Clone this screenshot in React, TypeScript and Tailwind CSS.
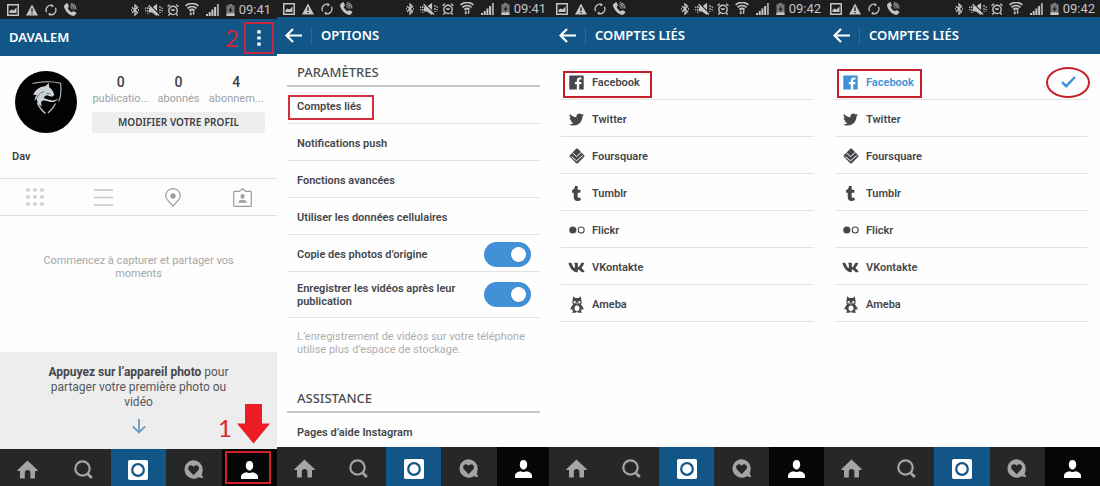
import React from 'react';
import { FaTwitter, FaVk } from 'react-icons/fa';
import { FaTumblr } from 'react-icons/fa6';

type IconProps = { className?: string };

const roboto = "font-['Roboto',sans-serif]";
const noto = "font-['Noto_Sans',sans-serif]";

/* ---------- status bar ---------- */

function StatusIconsLeft() {
  return (
    <div className="flex items-center gap-[7px]">
      <svg className="h-3 w-3" viewBox="0 0 12 12" aria-hidden="true">
        <rect x="0.75" y="0.75" width="10.5" height="10.5" fill="none" stroke="currentColor" strokeWidth="1.5" />
        <path d="M2.5 9V7L4.5 5.5L6.5 6.5L9.5 3.5V9Z" fill="currentColor" />
      </svg>
      <svg className="h-3 w-3" viewBox="0 0 12 12" aria-hidden="true">
        <path d="M6 0.5L12 11.5H0Z" fill="currentColor" />
        <path d="M6 4.3V8M6 9V10.3" stroke="#1d1e20" strokeWidth="1.3" />
      </svg>
      <svg className="h-3 w-3" viewBox="0 0 12 12" fill="none" stroke="currentColor" strokeWidth="1.3" aria-hidden="true">
        <path d="M1.6 8.2A4.9 4.9 0 0 1 7.8 1.5M10.4 3.8A4.9 4.9 0 0 1 4.2 10.5" />
        <path d="M6.6 0L9 2L6.4 3.4ZM5.4 12L3 10L5.6 8.6Z" fill="currentColor" stroke="none" />
      </svg>
      <svg className="h-[13px] w-[13px]" viewBox="0 0 13 13" aria-hidden="true">
        <path
          d="M0.5 2L2.7 0.2C3.2 0 3.5 0.2 3.8 0.7L4.9 3C5 3.5 4.9 3.8 4.5 4.1L3.6 4.9C4.5 6.8 5.8 8.2 7.8 9.3L8.8 8.4C9.1 8.1 9.5 8.1 9.9 8.3L12 9.6C12.4 9.9 12.5 10.3 12.2 10.7L10.5 12.5C9.8 13.1 8.8 13 7.6 12.5C4 10.9 1.4 8 0.2 4.4C0 3.4 0 2.6 0.5 2Z"
          fill="currentColor"
        />
        <path d="M6.3 4.3A2.6 2.6 0 0 1 8.3 6.6M6.5 2.4A4.4 4.4 0 0 1 10.2 6.6M6.7 0.6A6.3 6.3 0 0 1 12 6.6" fill="none" stroke="currentColor" strokeWidth="1.1" opacity="0.75" />
      </svg>
    </div>
  );
}

function StatusIconsRight() {
  return (
    <div className="flex items-center gap-[6px]">
      <svg className="h-3 w-2" viewBox="0 0 8 12" fill="none" stroke="currentColor" strokeWidth="1.3" aria-hidden="true">
        <path d="M1 3.3L6.6 8.6L4 11V1L6.6 3.4L1 8.7" />
        <path d="M0 6H1M7 6H8" />
      </svg>
      <svg className="-mr-0.5 h-3 w-[18px]" viewBox="0 0 18 12" fill="none" stroke="currentColor" strokeWidth="1.2" aria-hidden="true">
        <path d="M4.5 4.3H7L11.5 1V11L7 7.8H4.5Z" fill="currentColor" />
        <path d="M4 0.2L14.5 10.6" stroke="#1d1e20" strokeWidth="1.4" />
        <path d="M3.6 1.2L14 11.4" strokeWidth="1.4" />
        <path d="M2.8 3V10M15 2V9" strokeDasharray="2 1" />
        <path d="M0.7 3.5V8.5M17.2 3.5V8.5" strokeDasharray="1.4 1" />
      </svg>
      <svg className="h-3 w-3" viewBox="0 0 12 12" fill="none" stroke="currentColor" strokeWidth="1.4" aria-hidden="true">
        <circle cx="6" cy="6.4" r="4.2" />
        <path d="M6 6.6L4.2 5.2M6 6.6L7.6 5.4" />
        <path d="M0.6 2.8L2.8 0.8M11.4 2.8L9.2 0.8M2.8 9.8L1.4 11.6M9.2 9.8L10.6 11.6" />
      </svg>
      <svg className="h-[13px] w-[14px]" viewBox="0 0 14 13" fill="none" stroke="currentColor" strokeWidth="1.8" aria-hidden="true">
        <path d="M0.6 2.9A9.6 9.6 0 0 1 13.4 2.9M2.5 5.3A6.8 6.8 0 0 1 11.5 5.3M4.4 7.6A4 4 0 0 1 9.6 7.6" />
        <path d="M5.8 8.4V12M8.6 12V8.6" strokeWidth="1" />
        <path d="M4.3 10.6H7.2L5.8 12.8ZM7.3 10.2H10L8.6 8.2Z" fill="currentColor" stroke="none" />
      </svg>
      <svg className="ml-px h-3 w-[14px]" viewBox="0 0 14 12" fill="currentColor" aria-hidden="true">
        <path d="M0 10H2V12H0ZM2.7 8H4.7V12H2.7ZM5.4 5.6H7.4V12H5.4ZM8.1 3H10.1V12H8.1Z" />
        <path d="M10.9 0H12.9V12H10.9Z" opacity="0.8" />
      </svg>
      <svg className="h-3 w-[9px]" viewBox="0 0 9 12" aria-hidden="true">
        <path d="M2.8 0H6.2V1.2H8.5V12H0.5V1.2H2.8Z" fill="#77787a" />
        <path d="M0.5 9.4H8.5V12H0.5Z" fill="currentColor" />
        <path d="M5.6 2.4L2.4 6.6H4.3L3.6 9.6L6.8 5.4H4.9Z" fill="#1d1e20" />
      </svg>
    </div>
  );
}

function StatusBar({ time, className }: { time: string; className: string }) {
  return (
    <div className={`flex items-center justify-between bg-[#1d1e20] text-[#c4c5c6] ${className}`}>
      <StatusIconsLeft />
      <div className="flex items-center gap-1">
        <StatusIconsRight />
        <span className={`${roboto} text-[13px] leading-4`}>{time}</span>
      </div>
    </div>
  );
}

/* ---------- header ---------- */

function BackHeader({ title, className }: { title: string; className: string }) {
  return (
    <header className={`flex h-[37px] items-center bg-[#125688] text-white ${className}`}>
      <button type="button" aria-label="Retour" className="mr-[9px]">
        <svg className="h-[15px] w-[17px]" viewBox="0 0 17 15" fill="none" stroke="currentColor" strokeWidth="2.2" aria-hidden="true">
          <path d="M17 7.5H1.5M8 1L1.5 7.5L8 14" />
        </svg>
      </button>
      <span className="mr-[9px] h-[18px] w-px bg-[#2f6b98]" />
      <h1 className={`${noto} text-[13px] font-semibold`}>{title}</h1>
    </header>
  );
}

/* ---------- bottom navigation ---------- */

function NavBar({ className, highlighted = false }: { className: string; highlighted?: boolean }) {
  const cell = 'flex items-center justify-center pt-1';
  return (
    <nav className={`grid bg-[#262729] text-[#a3a4a6] ${className}`}>
      <button type="button" aria-label="Accueil" className={cell}>
        <svg className="h-[19px] w-[21px]" viewBox="0 0 21 19" fill="currentColor" aria-hidden="true">
          <path d="M10.5 0.5L20.8 10.2C21 10.6 20.8 11 20.3 11H18V17.6C18 18.3 17.6 18.6 17 18.6H13.4V12.5C13.4 11 12.3 10 10.6 10C8.9 10 7.8 11 7.8 12.5V18.6H4C3.4 18.6 3 18.3 3 17.6V11H0.7C0.2 11 0 10.6 0.3 10.2Z" />
        </svg>
      </button>
      <button type="button" aria-label="Rechercher" className={cell}>
        <svg className="h-[19px] w-[19px]" viewBox="0 0 19 19" fill="none" stroke="currentColor" aria-hidden="true">
          <circle cx="8.5" cy="8.5" r="7.2" strokeWidth="2.2" />
          <path d="M13.6 13.8L17.8 18" strokeWidth="2.8" />
        </svg>
      </button>
      <button type="button" aria-label="Appareil photo" className={`${cell} bg-[#125688] text-white`}>
        <svg className="h-5 w-5" viewBox="0 0 20 20" aria-hidden="true">
          <rect width="20" height="20" rx="1.8" fill="currentColor" />
          <circle cx="10" cy="10" r="5.8" fill="none" stroke="#125688" strokeWidth="2.2" />
        </svg>
      </button>
      <button type="button" aria-label="Activité" className={cell}>
        <svg className="h-[19px] w-5" viewBox="0 0 20 19" aria-hidden="true">
          <path d="M9.5 0.3A9.2 9.2 0 0 1 18.7 9.5C18.7 11.7 18.2 13.2 17.7 14.4L19.3 18.3L14.6 17.3A9.2 9.2 0 1 1 9.5 0.3Z" fill="currentColor" />
          <path d="M9.6 15.2L5.1 10.6C3.2 8.2 4.6 5.3 6.9 5.3C8.2 5.3 9.1 6 9.6 7C10.1 6 11 5.3 12.3 5.3C14.6 5.3 16 8.2 14.1 10.6Z" fill="#262729" />
        </svg>
      </button>
      <button type="button" aria-label="Profil" className={`relative ${cell} bg-[#060606] text-white`}>
        <svg className="h-[18px] w-[17px]" viewBox="0 0 17 18" fill="currentColor" aria-hidden="true">
          <path d="M8.5 0C11 0 12.2 1.9 12.2 4.6C12.2 7.2 10.7 9.6 8.5 9.6C6.3 9.6 4.8 7.2 4.8 4.6C4.8 1.9 6 0 8.5 0Z" />
          <path d="M0 18V15.5C0 13.2 2.5 11.9 5.6 11.3C7.2 12.3 9.8 12.3 11.4 11.3C14.5 11.9 17 13.2 17 15.5V18Z" />
        </svg>
        {highlighted && <span className="absolute top-0.5 right-[6px] bottom-0.5 left-[3px] border-2 border-[#d8202a]" />}
      </button>
    </nav>
  );
}

/* ---------- screen 1 : profile ---------- */

function Avatar() {
  return (
    <svg className="h-[62px] w-[62px] shrink-0" viewBox="0 0 62 62" role="img" aria-label="Dav">
      <circle cx="31" cy="31" r="31" fill="#020202" />
      <g fill="none" stroke="#b9c0c2">
        <path d="M17.5 12.5C26 10.3 38 10.2 45.6 12.3C46.4 20 46 26 43.6 30.5" strokeWidth="1.1" />
        <path d="M40.5 32.5C38.5 36.5 36 39.5 33 42" strokeWidth="1.3" />
        <path d="M22.5 32C24.3 36.5 27 39.6 30.5 42.3" strokeWidth="1.6" />
      </g>
      <path
        d="M18 24C19.5 20.5 22 17.6 26 16L30.5 15L33.8 12L34.2 16.2C36.5 17.6 38 20 39.2 23.4C38.4 25.8 36.5 25.9 35 25.2L32 24.2C30 24.6 29.2 25.6 29 27.2C31.5 27.6 34 29.2 37 29.4C39.4 29.5 41 28.7 43 27.4C41.2 30.4 38.6 31.5 35.4 31C32 30.5 29.4 28.8 27 30C25.6 31 26 33 27 35.5C23.2 33.5 21.4 30.6 21.8 27.2L19.5 29.8C19.6 27.3 20.4 25.8 21.6 24.2C20.4 23.6 19.4 23.5 18 24Z"
        fill="#c9d2d6"
      />
      <path d="M22 27C23 23.5 25.5 21.5 29 20.6M31.5 22.3L35.5 22.8" fill="none" stroke="#5b676d" strokeWidth="0.9" />
    </svg>
  );
}

const stats = [
  { value: '0', label: 'publicatio...' },
  { value: '0', label: 'abonnés' },
  { value: '4', label: 'abonnem...' },
];

function GridIcon({ className }: IconProps) {
  return (
    <svg className={className} viewBox="0 0 18 18" fill="#cfcfcf" aria-hidden="true">
      {[0, 7, 14].map((y) => [0, 7, 14].map((x) => <rect key={`${x}-${y}`} x={x + 0.3} y={y + 0.3} width="3.3" height="3.3" />))}
    </svg>
  );
}

function ProfileScreen() {
  const tab = 'flex items-center justify-center';
  return (
    <section className="flex min-w-0 flex-col bg-[#fdfdfd]">
      <StatusBar time="09:41" className="h-[19px] pr-[6px] pl-[7px]" />
      <header className="flex h-[37px] items-center justify-between bg-[#125688] pr-[3px] pl-[9px] text-white">
        <h1 className={`${noto} text-[13px] font-semibold`}>DAVALEM</h1>
        <div className="flex items-center gap-[5px]">
          <span className="font-['Lato',sans-serif] text-2xl leading-8 text-[#d0243a]">2</span>
          <button type="button" aria-label="Menu" className="flex h-8 w-[30px] items-center justify-center border-2 border-[#c9283c]">
            <svg className="h-4 w-1" viewBox="0 0 4 16" fill="currentColor" aria-hidden="true">
              <path d="M0.3 0.3H3.7V3.4H0.3ZM0.3 6.4H3.7V9.6H0.3ZM0.3 12.6H3.7V15.7H0.3Z" />
            </svg>
          </button>
        </div>
      </header>

      <main className="flex flex-1 flex-col">
        <div className="flex gap-[15px] pt-[15px] pr-3 pl-[15px]">
          <Avatar />
          <div className="min-w-0 flex-1">
            <dl className="grid grid-cols-3 pt-px text-center">
              {stats.map((s) => (
                <div key={s.label} className="flex flex-col-reverse">
                  <dt className={`${roboto} text-[11px] leading-[14px] whitespace-nowrap text-[#a0a1a3]`}>{s.label}</dt>
                  <dd className={`${roboto} text-sm leading-5 font-medium text-[#3c3f43]`}>{s.value}</dd>
                </div>
              ))}
            </dl>
            <button type="button" className={`${noto} mt-[6px] h-[21px] w-full rounded-xs bg-[#eeeeee] text-[10px] font-semibold text-[#3f4246]`}>
              MODIFIER VOTRE PROFIL
            </button>
          </div>
        </div>
        <p className={`${roboto} mt-[17px] pl-3 text-[11px] leading-[14px] font-semibold text-[#3c3f43]`}>Dav</p>

        <div className="mt-[14px] grid h-[38px] grid-cols-4 border-y border-[#dedede]">
          <button type="button" aria-label="Grille" className={tab}>
            <GridIcon className="h-[18px] w-[18px]" />
          </button>
          <button type="button" aria-label="Liste" className={tab}>
            <svg className="h-[17px] w-[19px]" viewBox="0 0 19 17" stroke="#c4c4c4" strokeWidth="1.3" aria-hidden="true">
              <path d="M0 1H19M0 8.5H19M0 16H19" />
            </svg>
          </button>
          <button type="button" aria-label="Carte" className={tab}>
            <svg className="h-[19px] w-4" viewBox="0 0 16 19" aria-hidden="true">
              <path d="M8 18L2.7 12.2C1.4 10.7 0.7 9.4 0.7 7.7A7.3 7.1 0 0 1 15.3 7.7C15.3 9.4 14.6 10.7 13.3 12.2Z" fill="none" stroke="#9b9d9f" strokeWidth="1.2" />
              <circle cx="8" cy="8" r="2.7" fill="#9b9d9f" />
            </svg>
          </button>
          <button type="button" aria-label="Photos de vous" className={tab}>
            <svg className="h-[19px] w-[19px]" viewBox="0 0 19 19" aria-hidden="true">
              <path d="M1.6 3.3H6.6L9.5 0.8L12.4 3.3H17.4C18 3.3 18.3 3.6 18.3 4.2V17.4C18.3 18 18 18.3 17.4 18.3H1.6C1 18.3 0.7 18 0.7 17.4V4.2C0.7 3.6 1 3.3 1.6 3.3Z" fill="none" stroke="#9b9d9f" strokeWidth="1.2" />
              <path d="M9.5 5.9C10.9 5.9 11.5 6.9 11.5 8.2C11.5 9.6 10.7 10.8 9.5 10.8C8.3 10.8 7.5 9.6 7.5 8.2C7.5 6.9 8.1 5.9 9.5 5.9ZM5.3 14.8C5.3 12.9 6.6 12.2 8.1 11.9C9 12.4 10 12.4 10.9 11.9C12.4 12.2 13.7 12.9 13.7 14.8Z" fill="#9b9d9f" />
            </svg>
          </button>
        </div>

        <p className={`${roboto} px-10 pt-[38px] text-center text-[11px] leading-[13px] text-[#a6a7a9]`}>
          Commencez à capturer et partager vos moments
        </p>

        <div className="relative mt-auto flex h-[97px] flex-col items-center bg-[#ededed] px-9 pt-[13px]">
          <p className={`${roboto} text-center text-xs leading-[15px] text-[#55585c]`}>
            <strong className="font-bold text-[#44474b]">Appuyez sur l’appareil photo</strong> pour partager votre première photo ou vidéo
          </p>
          <svg className="mt-[8px] h-4 w-[14px]" viewBox="0 0 14 16" fill="none" stroke="#6f9abc" strokeWidth="1.8" aria-hidden="true">
            <path d="M7 1V14.4M0.9 8.3L7 14.4L13.1 8.3" />
          </svg>
          <div className="absolute right-[7px] bottom-[5px] flex items-end gap-[5px]">
            <span className="font-['Lato',sans-serif] text-2xl leading-8 text-[#e0242e]">1</span>
            <svg className="h-10 w-[33px]" viewBox="0 0 33 40" fill="#ec1c24" aria-hidden="true">
              <path d="M8 0H25V19.5H33L16.5 39.5L0 19.5H8Z" />
            </svg>
          </div>
        </div>
      </main>
      <NavBar className="h-[37px] grid-cols-5" highlighted />
    </section>
  );
}

/* ---------- screen 2 : options ---------- */

const rowText = `${roboto} text-[11px] leading-[13px] font-semibold text-[#44474b]`;

function SectionTitle({ children, className }: { children: React.ReactNode; className: string }) {
  return <h2 className={`${noto} border-b-2 border-[#c6c7c8] pl-[10px] text-[13px] leading-5 font-medium text-[#4a4d51] ${className}`}>{children}</h2>;
}

function Toggle({ id }: { id: string }) {
  return (
    <input
      id={id}
      type="checkbox"
      role="switch"
      defaultChecked
      className="relative h-[25px] w-[47px] shrink-0 appearance-none rounded-full bg-[#c4c4c4] before:absolute before:top-[5px] before:left-[5px] before:size-[15px] before:rounded-full before:bg-white before:shadow-sm checked:bg-[#4291d6] checked:before:left-[27px]"
    />
  );
}

function OptionsScreen() {
  const row = 'flex h-[37px] items-center border-b border-[#e3e3e3] pt-0.5 pl-[10px]';
  return (
    <section className="flex min-w-0 flex-col bg-[#fefefe]">
      <StatusBar time="09:41" className="h-[17px] pr-[3px] pl-[6px]" />
      <BackHeader title="OPTIONS" className="pl-2" />
      <main className="flex flex-1 flex-col pr-[9px] pl-[10px]">
        <SectionTitle className="pt-2 pb-[3px]">PARAMÈTRES</SectionTitle>
        <ul>
          <li className={`${row} relative`}>
            <a href="#comptes" className={rowText}>Comptes liés</a>
            <span className="absolute top-2 left-px h-[25px] w-[86px] border-2 border-[#cf2f39]" />
          </li>
          <li className={row}>
            <a href="#notifications" className={rowText}>Notifications push</a>
          </li>
          <li className={row}>
            <a href="#fonctions" className={rowText}>Fonctions avancées</a>
          </li>
          <li className={row}>
            <a href="#donnees" className={rowText}>Utiliser les données cellulaires</a>
          </li>
          <li className={`${row} justify-between pr-[9px]`}>
            <label htmlFor="copie" className={rowText}>Copie des photos d’origine</label>
            <Toggle id="copie" />
          </li>
          <li className="flex h-[46px] items-center justify-between border-b border-[#e3e3e3] pr-[9px] pl-[10px]">
            <label htmlFor="videos" className={`${rowText} w-44`}>Enregistrer les vidéos après leur publication</label>
            <Toggle id="videos" />
          </li>
        </ul>
        <p className={`${roboto} pt-3 pr-2 pl-[10px] text-[11px] leading-[13px] text-[#adaeb0]`}>
          L’enregistrement de vidéos sur votre téléphone utilise plus d’espace de stockage.
        </p>
        <SectionTitle className="pt-8 pb-[3px]">ASSISTANCE</SectionTitle>
        <a href="#aide" className={`${rowText} pt-[13px] pl-[10px]`}>Pages d’aide Instagram</a>
      </main>
      <NavBar className="h-[39px] grid-cols-[54fr_55fr_55fr_56fr_52fr]" />
    </section>
  );
}

/* ---------- screens 3 and 4 : linked accounts ---------- */

function FacebookIcon({ className }: IconProps) {
  return (
    <svg className={className} viewBox="0 0 15 15" aria-hidden="true">
      <path
        d="M0.9 0.4H14.1C14.5 0.4 14.7 0.6 14.7 1V14C14.7 14.4 14.5 14.6 14.1 14.6H10.2V9.2H12.2L12.5 7H10.2V5.6C10.2 4.9 10.5 4.6 11.2 4.6H12.5V2.6C12.1 2.5 11.5 2.5 10.7 2.5C8.9 2.5 7.8 3.5 7.8 5.4V7H5.9V9.2H7.8V14.6H0.9C0.5 14.6 0.3 14.4 0.3 14V1C0.3 0.6 0.5 0.4 0.9 0.4Z"
        fill="currentColor"
      />
    </svg>
  );
}

function FoursquareIcon({ className }: IconProps) {
  return (
    <svg className={className} viewBox="0 0 16 16" aria-hidden="true">
      <path d="M7.2 0.8C7.7 0.3 8.3 0.3 8.8 0.8L15.2 7.2C15.7 7.7 15.7 8.3 15.2 8.8L8.8 15.2C8.3 15.7 7.7 15.7 7.2 15.2L0.8 8.8C0.3 8.3 0.3 7.7 0.8 7.2Z" fill="currentColor" />
      <path d="M3.4 4.8L7.6 8.6L12.6 4.1M2.2 8.6L7.6 12.8L13.8 7.4" fill="none" stroke="#fff" strokeWidth="1" />
    </svg>
  );
}

function FlickrIcon({ className }: IconProps) {
  return (
    <svg className={className} viewBox="0 0 16 16" aria-hidden="true">
      <circle cx="3.8" cy="8" r="3.6" fill="currentColor" />
      <circle cx="12.2" cy="8" r="3" fill="none" stroke="currentColor" strokeWidth="1.1" />
    </svg>
  );
}

function AmebaIcon({ className }: IconProps) {
  return (
    <svg className={className} viewBox="0 0 14 17" aria-hidden="true">
      <path
        d="M3.2 0.2L5.2 2H8.8L10.8 0.2L11.3 3.2L11.6 6.4C11.6 7.4 11.2 8 10.8 8.6C12 9.6 13 11 13.8 13.4L11.7 13.2C11.6 14 11.3 14.6 10.9 15L12.2 16.8H7.8L7.4 15.6H6.6L6.2 16.8H1.8L3.1 15C2.7 14.6 2.4 14 2.3 13.2L0.2 13.4C1 11 2 9.6 3.2 8.6C2.8 8 2.4 7.4 2.4 6.4L2.7 3.2Z"
        fill="currentColor"
      />
      <circle cx="4.9" cy="6.2" r="1.25" fill="#fff" />
      <circle cx="9.1" cy="6.2" r="1.25" fill="#fff" />
      <circle cx="5.2" cy="6.3" r="0.5" fill="currentColor" />
      <circle cx="8.8" cy="6.3" r="0.5" fill="currentColor" />
      <path d="M6.1 7.6H7.9L7 8.7Z" fill="#fff" />
      <ellipse cx="7" cy="12.2" rx="2.5" ry="2.7" fill="#fff" />
    </svg>
  );
}

const accounts = [
  { name: 'Facebook', icon: <FacebookIcon className="size-[15px]" /> },
  { name: 'Twitter', icon: <FaTwitter className="size-[15px]" /> },
  { name: 'Foursquare', icon: <FoursquareIcon className="size-4" /> },
  { name: 'Tumblr', icon: <FaTumblr className="size-[15px]" /> },
  { name: 'Flickr', icon: <FlickrIcon className="size-4" /> },
  { name: 'VKontakte', icon: <FaVk className="size-[17px]" /> },
  { name: 'Ameba', icon: <AmebaIcon className="h-[17px] w-[14px]" /> },
];

function AccountsScreen({ linked = false, pad, headerPad, statusPad }: { linked?: boolean; pad: string; headerPad: string; statusPad: string }) {
  return (
    <section className="flex min-w-0 flex-col bg-[#fefefe]">
      <StatusBar time="09:42" className={`h-[17px] ${statusPad}`} />
      <BackHeader title="COMPTES LIÉS" className={headerPad} />
      <main className={`flex-1 pt-[9px] ${pad}`}>
        <ul>
          {accounts.map((a) => {
            const facebook = a.name === 'Facebook';
            const active = facebook && linked;
            return (
              <li key={a.name} className="relative flex h-[37px] items-center border-b border-[#e3e3e3] pt-0.5 pl-[7px]">
                <a href={`#${a.name.toLowerCase()}`} className={`${roboto} flex flex-1 items-center gap-[7px] text-[11px] leading-[13px] font-semibold ${active ? 'text-[#4291d6]' : 'text-[#44474b]'}`}>
                  <span className="flex w-[17px] justify-center">{a.icon}</span>
                  {a.name}
                </a>
                {facebook && !linked && <span className="absolute top-2 left-[2px] h-[27px] w-[89px] border-2 border-[#c4202b]" />}
                {active && (
                  <>
                    <span className="absolute top-[6px] left-[2px] h-[29px] w-[85px] border-2 border-[#c4202b]" />
                    <svg className="mr-[11px] h-3 w-[15px]" viewBox="0 0 15 12" fill="none" stroke="#4291d6" strokeWidth="2.4" role="img" aria-label="Lié">
                      <path d="M1 6.2L5.2 10.2L14 1" />
                    </svg>
                    <span className="absolute top-1 -right-[3px] h-[31px] w-[44px] rounded-[50%] border-2 border-[#c4202b]" />
                  </>
                )}
              </li>
            );
          })}
        </ul>
      </main>
      <NavBar className="h-[39px] grid-cols-5" />
    </section>
  );
}

export default function App() {
  return (
    <div className="grid min-h-screen grid-cols-[277fr_272fr_275fr_276fr] overflow-hidden">
      <ProfileScreen />
      <OptionsScreen />
      <AccountsScreen pad="pr-[10px] pl-3" headerPad="pl-[10px]" statusPad="pr-[3px] pl-[7px]" />
      <AccountsScreen linked pad="pr-[13px] pl-[11px]" headerPad="pl-[9px]" statusPad="pr-[5px] pl-[6px]" />
    </div>
  );
}
